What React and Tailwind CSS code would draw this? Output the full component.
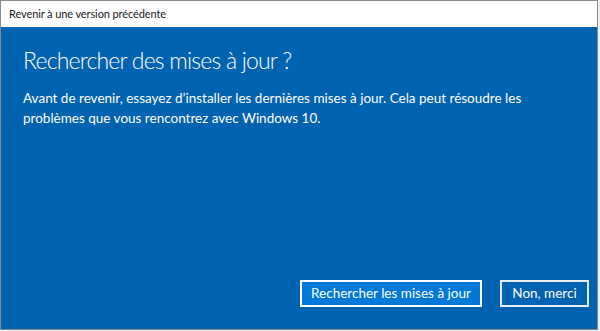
export default function App() {
  return (
    <div className="w-[600px] h-[331px] bg-[#f0f0f0] overflow-hidden" style={{ fontFamily: 'Lato, "Noto Sans", sans-serif' }}>
      <div className="w-[598px] h-[330px] border border-[#8a8a8a] flex flex-col">
        {/* Title bar */}
        <div className="h-[26px] bg-white flex items-center pl-[8px] text-[11px] tracking-[-0.1px] text-[#1a1a1a]">
          Revenir à une version précédente
        </div>
        {/* Content */}
        <div className="flex-1 bg-[#0063b1] text-white flex flex-col">
          <div className="px-[22px]">
            <h1 className="mt-[18px] text-[23px] font-light leading-[30px] tracking-[-0.8px]">Rechercher des mises à jour ?</h1>
            <p className="mt-[13px] text-[13.5px] leading-[20px] w-[540px]">
              Avant de revenir, essayez d’installer les dernières mises à jour. Cela peut résoudre les problèmes que vous rencontrez avec Windows 10.
            </p>
          </div>
          <div className="mt-auto mb-[22px] flex justify-end gap-[18px] pr-[8px]">
            <button className="h-[27px] w-[182px] bg-[#0078d7] border-2 border-white text-[13.5px] text-white whitespace-nowrap">
              Rechercher les mises à jour
            </button>
            <button className="h-[27px] w-[89px] border-2 border-white/90 text-[13.5px] text-white whitespace-nowrap">
              Non, merci
            </button>
          </div>
        </div>
      </div>
    </div>
  )
}
